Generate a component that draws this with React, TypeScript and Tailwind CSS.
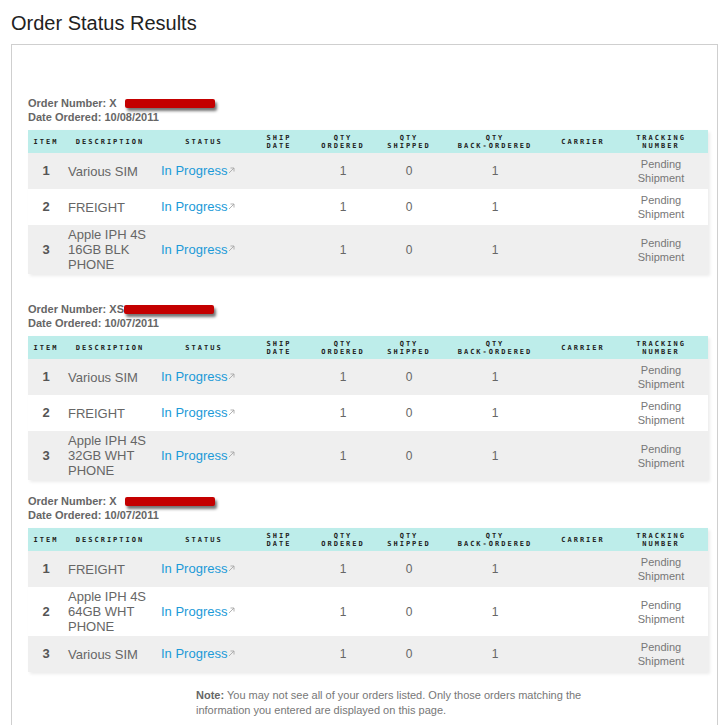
const cols = [36, 92, 96, 54, 74, 58, 114, 62, 94];

const heads: string[][] = [
  ["Item"],
  ["Description"],
  ["Status"],
  ["Ship", "Date"],
  ["Qty", "Ordered"],
  ["Qty", "Shipped"],
  ["Qty", "Back-Ordered"],
  ["Carrier"],
  ["Tracking", "Number"],
];

type Order = { suffix: string; date: string; items: string[][]; gap: string; bar: string };

const orders: Order[] = [
  {
    suffix: "X",
    date: "10/08/2011",
    gap: "mt-0",
    bar: "ml-[8px]",
    items: [["Various SIM"], ["FREIGHT"], ["Apple IPH 4S", "16GB BLK", "PHONE"]],
  },
  {
    suffix: "XS",
    date: "10/07/2011",
    gap: "mt-[28px]",
    bar: "ml-0",
    items: [["Various SIM"], ["FREIGHT"], ["Apple IPH 4S", "32GB WHT", "PHONE"]],
  },
  {
    suffix: "X",
    date: "10/07/2011",
    gap: "mt-[14px]",
    bar: "ml-[8px]",
    items: [["FREIGHT"], ["Apple IPH 4S", "64GB WHT", "PHONE"], ["Various SIM"]],
  },
];

function ArrowIcon() {
  return (
    <svg width="7" height="7" viewBox="0 0 7 7" className="inline-block ml-[1px] mb-[3px]">
      <path d="M1 6 L6 1 M2.5 1 H6 V4.5" stroke="#a8a8a8" strokeWidth="0.9" fill="none" />
    </svg>
  );
}

function OrderTable({ order }: { order: Order }) {
  return (
    <div className={order.gap}>
      <div className="text-[11px] leading-[14px] font-bold text-[#666]">
        <div className="flex items-center">
          Order Number: {order.suffix}
          <span
            className={`inline-block w-[90px] h-[9px] mt-[1px] bg-[#c40000] rounded-[2px] shadow-[2px_3px_3px_rgba(0,0,0,0.55)] ${order.bar}`}
          />
        </div>
        <div>Date Ordered: {order.date}</div>
      </div>
      <table className="mt-[6px] table-fixed border-collapse w-[680px] shadow-[2px_2px_3px_rgba(0,0,0,0.08)]">
        <colgroup>
          {cols.map((w, i) => (
            <col key={i} style={{ width: w }} />
          ))}
        </colgroup>
        <thead>
          <tr className="bg-[#bdedea]">
            {heads.map((h, i) => (
              <th
                key={i}
                className="py-[3.5px] text-center align-middle font-bold uppercase text-[7px] leading-[8px] tracking-[2px] text-[#222] font-['DejaVu_Sans_Mono',monospace]"
              >
                {h.map((l, j) => (
                  <div key={j}>{l}</div>
                ))}
              </th>
            ))}
          </tr>
        </thead>
        <tbody>
          {order.items.map((desc, i) => (
            <tr key={i} className={i % 2 === 0 ? "bg-[#efefef]" : "bg-white"}>
              <td className="text-center align-middle font-bold text-[13px] text-[#555]">{i + 1}</td>
              <td className="pl-[4px] py-[2px] align-middle text-[13px] leading-[15px] text-[#666]">
                {desc.map((l, j) => (
                  <div key={j}>{l}</div>
                ))}
              </td>
              <td className="pl-[5px] align-middle text-[13px] text-[#1b9ad8] whitespace-nowrap">
                In Progress
                <ArrowIcon />
              </td>
              <td />
              <td className="text-center align-middle text-[12px] text-[#666]">1</td>
              <td className="text-center align-middle text-[12px] text-[#666]">0</td>
              <td className="text-center align-middle text-[12px] text-[#666]">1</td>
              <td />
              <td className="py-[4px] text-center align-middle text-[11px] leading-[14px] text-[#777]">
                <div>Pending</div>
                <div>Shipment</div>
              </td>
            </tr>
          ))}
        </tbody>
      </table>
    </div>
  );
}

export default function App() {
  return (
    <div className="bg-white min-h-[725px] font-['Liberation_Sans',Arial,sans-serif] overflow-hidden">
      <h1 className="pt-[10px] pl-[11px] text-[20px] leading-[26px] text-[#222]">Order Status Results</h1>
      <div className="mt-[8px] ml-[11px] w-[707px] border-l border-t border-r border-[#cfcfcf] pl-[16px] pt-[51px] pb-[20px]">
        {orders.map((o, i) => (
          <OrderTable key={i} order={o} />
        ))}
        <div className="mt-[16px] ml-[168px] w-[400px] text-[11px] leading-[15px] text-[#777]">
          <div>
            <span className="font-bold text-[#666]">Note:</span> You may not see all of your orders listed. Only
            those orders matching the
          </div>
          <div>information you entered are displayed on this page.</div>
        </div>
      </div>
    </div>
  );
}
